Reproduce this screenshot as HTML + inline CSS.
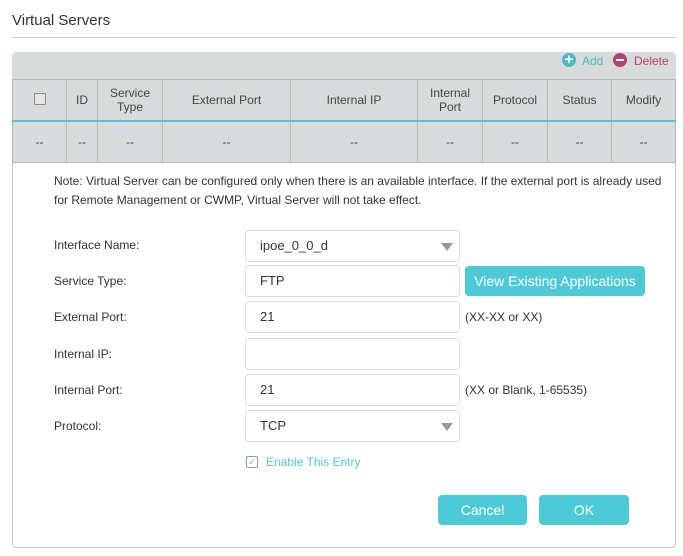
<!DOCTYPE html>
<html><head><style>
body{margin:0;background:#fff;font-family:"Liberation Sans",sans-serif;color:#333;width:683px;height:556px;position:relative;overflow:hidden}
.a{position:absolute}
.title{left:12px;top:12px;font-size:15px;color:#333}
.hr{left:12px;top:37px;width:664px;height:1px;background:#ccc}
.gray{left:12px;top:52px;width:664px;height:110px;background:#d8dbdc;border-radius:4px 4px 0 0}
table{position:absolute;left:12px;top:79px;border-collapse:collapse;font-size:12px;color:#444}
td{border:1px solid #b8b8b8;text-align:center;padding:0;background:#d8dbdc;line-height:14px}
tr.h td{height:40px;border-bottom:2px solid #4bc7cf}
tr.d td{height:40px}
.form{left:12px;top:162px;width:662px;height:385px;border:1px solid #c8c8c8;border-top:none;border-radius:0 0 4px 4px}
.lbl{left:54px;font-size:12px;color:#333}
.in{left:245px;width:215px;border:1px solid #ddd;border-radius:4px;font-size:13px;color:#333;line-height:30px;text-indent:14px;box-sizing:border-box;height:32px}
.tri{right:6px;top:12px;width:0;height:0;border-left:6px solid transparent;border-right:6px solid transparent;border-top:8px solid #999}
.hint{left:465px;font-size:12px;color:#333}
.btn{background:#4ecad6;color:#fff;border-radius:4px;text-align:center}
</style></head><body>
<div class="a title">Virtual Servers</div>
<div class="a hr"></div>
<div class="a gray"></div>
<div class="a" style="left:562px;top:53px;width:14px;height:14px;border-radius:50%;background:#4bb8c4;color:#fff;font-size:15px;line-height:14px;text-align:center;font-weight:bold">+</div>
<div class="a" style="left:582px;top:54px;font-size:12px;color:#4bb8c4">Add</div>
<div class="a" style="left:613px;top:53px;width:14px;height:14px;border-radius:50%;background:#b63f73"><div class="a" style="left:3px;top:6px;width:8px;height:2px;background:#fff"></div></div>
<div class="a" style="left:634px;top:54px;font-size:12px;color:#b63f73">Delete</div>
<table>
<tr class="h"><td style="width:53px"><span style="display:inline-block;width:10px;height:10px;border:1px solid #888;border-radius:2px;background:#e4e4e4"></span></td><td style="width:30px">ID</td><td style="width:64px">Service<br>Type</td><td style="width:127px">External Port</td><td style="width:126px">Internal IP</td><td style="width:64px">Internal<br>Port</td><td style="width:64px">Protocol</td><td style="width:63px">Status</td><td style="width:63px">Modify</td></tr>
<tr class="d"><td>--</td><td>--</td><td>--</td><td>--</td><td>--</td><td>--</td><td>--</td><td>--</td><td>--</td></tr>
</table>
<div class="a form"></div>
<div class="a" style="left:54px;top:172px;font-size:12px;line-height:19px;color:#333;width:610px">Note: Virtual Server can be configured only when there is an available interface. If the external port is already used for Remote Management or CWMP, Virtual Server will not take effect.</div>
<div class="a lbl" style="top:238px">Interface Name:</div>
<div class="a lbl" style="top:274px">Service Type:</div>
<div class="a lbl" style="top:310px">External Port:</div>
<div class="a lbl" style="top:347px">Internal IP:</div>
<div class="a lbl" style="top:383px">Internal Port:</div>
<div class="a lbl" style="top:419px">Protocol:</div>
<div class="a in" style="top:230px">ipoe_0_0_d<div class="a tri"></div></div>
<div class="a in" style="top:265px">FTP</div>
<div class="a in" style="top:301px">21</div>
<div class="a in" style="top:338px"></div>
<div class="a in" style="top:374px">21</div>
<div class="a in" style="top:410px">TCP<div class="a tri"></div></div>
<div class="a btn" style="left:465px;top:266px;width:180px;height:30px;line-height:30px;font-size:14px">View Existing Applications</div>
<div class="a hint" style="top:310px">(XX-XX or XX)</div>
<div class="a hint" style="top:383px">(XX or Blank, 1-65535)</div>
<div class="a" style="left:246px;top:456px;width:10px;height:10px;border:1px solid #999;border-radius:2px;font-size:9px;line-height:10px;text-align:center;color:#4ecad6">✓</div>
<div class="a" style="left:266px;top:455px;font-size:12px;color:#4ecad6">Enable This Entry</div>
<div class="a btn" style="left:438px;top:495px;width:89px;height:30px;line-height:30px;font-size:14px">Cancel</div>
<div class="a btn" style="left:539px;top:495px;width:90px;height:30px;line-height:30px;font-size:14px">OK</div>
</body></html>
